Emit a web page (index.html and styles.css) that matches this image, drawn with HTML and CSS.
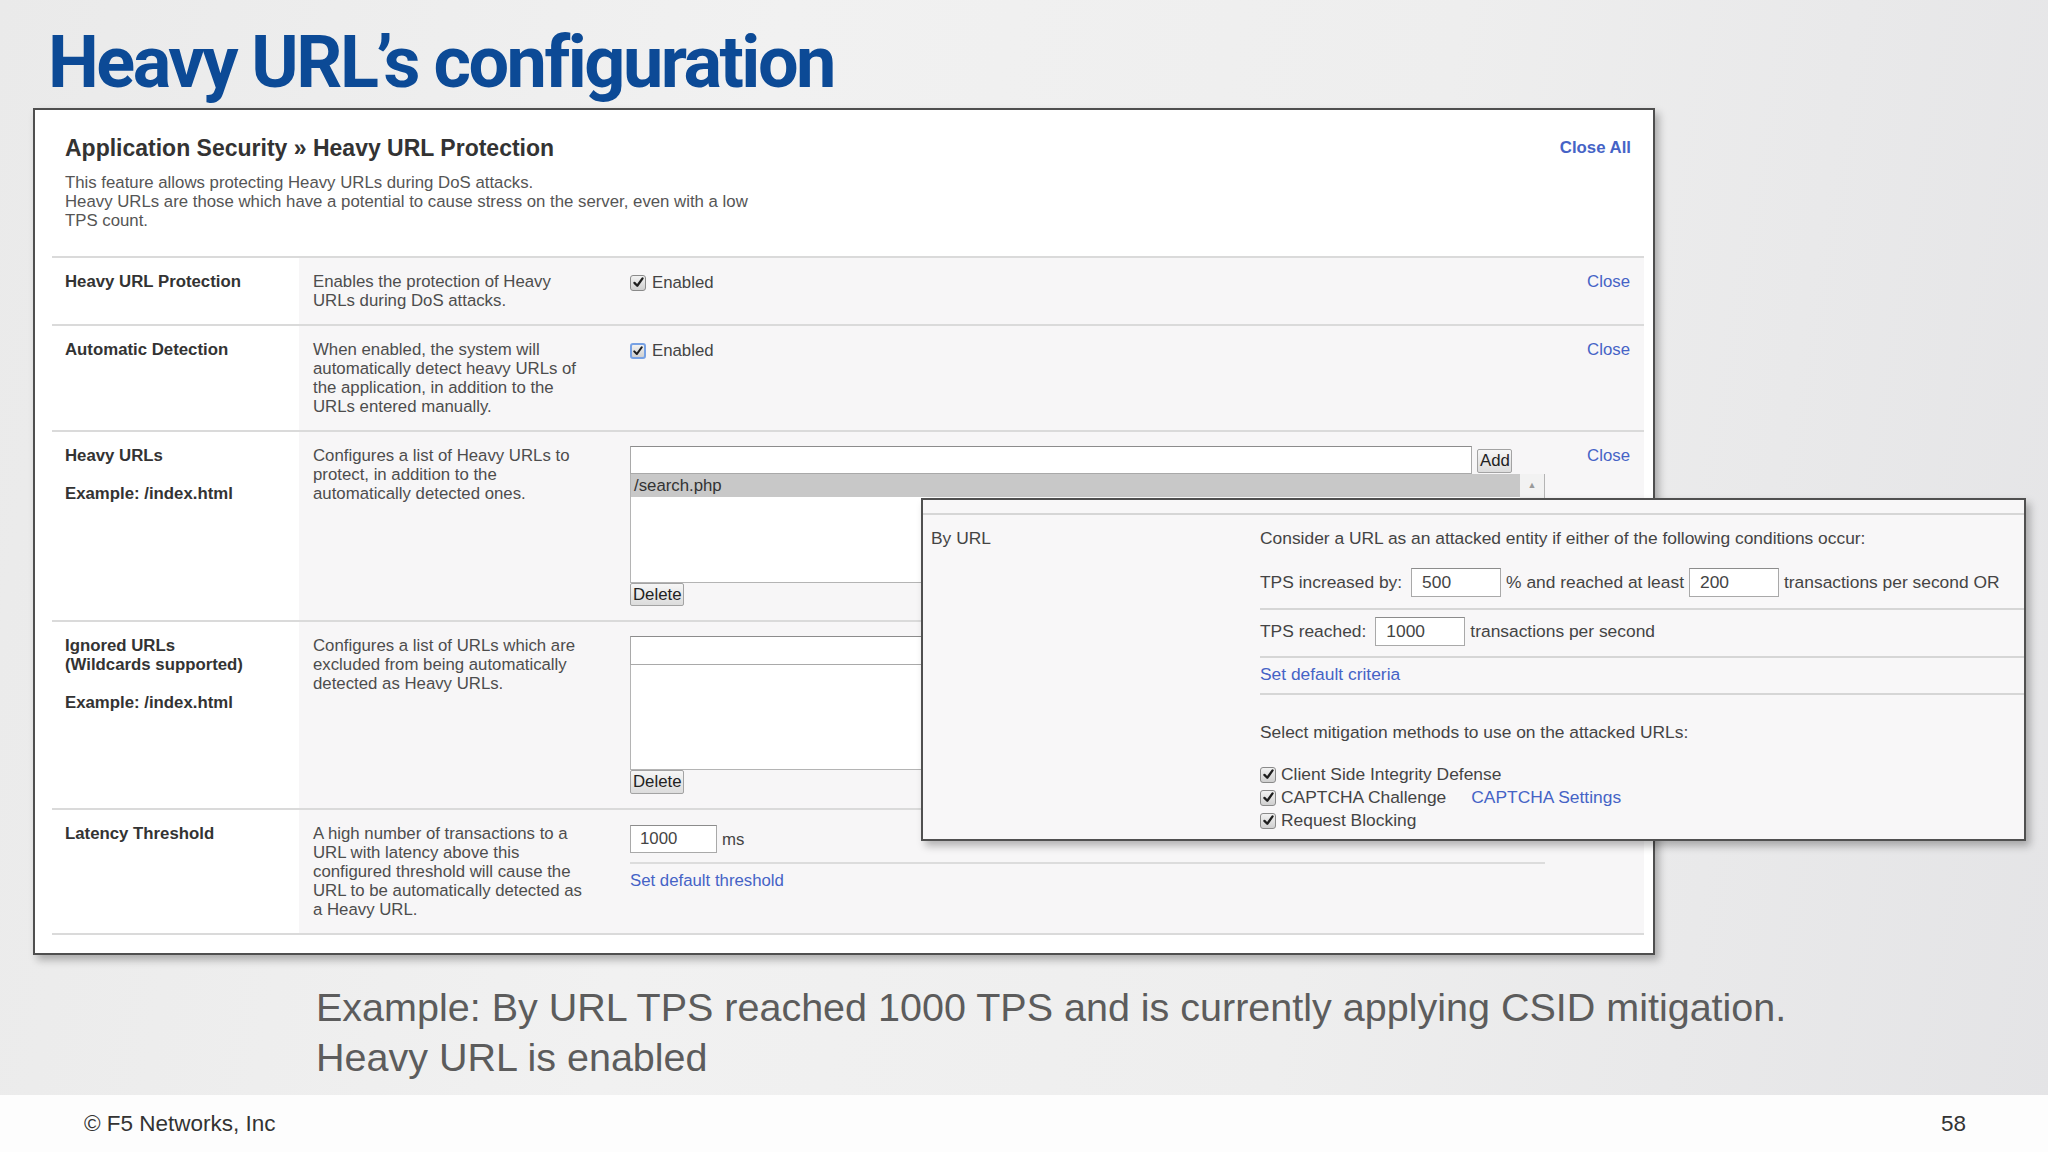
FILE: index.html
```html
<!DOCTYPE html>
<html>
<head>
<meta charset="utf-8">
<title>Heavy URL's configuration</title>
<link rel="stylesheet" href="styles.css">
</head>
<body>
<div class="slide">
  <h1 class="title">Heavy URL’s configuration</h1>

  <div class="panel">
    <div class="phead">
      <div class="phead-top">
        <h2 class="ptitle">Application Security » Heavy URL Protection</h2>
        <span class="closeall">Close All</span>
      </div>
      <p class="intro">This feature allows protecting Heavy URLs during DoS attacks.<br>Heavy URLs are those which have a potential to cause stress on the server, even with a low<br>TPS count.</p>
    </div>

    <div class="row">
      <div class="lbl">Heavy URL Protection</div>
      <div class="desc">Enables the protection of Heavy<br>URLs during DoS attacks.</div>
      <div class="ctl">
        <label class="chk"><span class="box"><svg viewBox="0 0 16 16" width="13" height="13"><path d="M3 8.5 L6.5 12 L13 3" fill="none" stroke="#1e1e1e" stroke-width="2.8" stroke-linecap="round" stroke-linejoin="round"/></svg></span>Enabled</label>
      </div>
      <div class="cls">Close</div>
    </div>

    <div class="row">
      <div class="lbl">Automatic Detection</div>
      <div class="desc">When enabled, the system will<br>automatically detect heavy URLs of<br>the application, in addition to the<br>URLs entered manually.</div>
      <div class="ctl">
        <label class="chk"><span class="box focus"><svg viewBox="0 0 16 16" width="12" height="12"><path d="M3 8.5 L6.5 12 L13 3" fill="none" stroke="#1e1e1e" stroke-width="2.8" stroke-linecap="round" stroke-linejoin="round"/></svg></span>Enabled</label>
      </div>
      <div class="cls">Close</div>
    </div>

    <div class="row">
      <div class="lbl">Heavy URLs<br><br>Example: /index.html</div>
      <div class="desc">Configures a list of Heavy URLs to<br>protect, in addition to the<br>automatically detected ones.</div>
      <div class="ctl">
        <div class="addline"><span class="inp url"></span><span class="btn add">Add</span></div>
        <div class="list list1">
          <div class="lcol"><div class="item">/search.php</div></div>
          <div class="sb">▲</div>
        </div>
        <span class="btn del">Delete</span>
      </div>
      <div class="cls">Close</div>
    </div>

    <div class="row">
      <div class="lbl">Ignored URLs<br>(Wildcards supported)<br><br>Example: /index.html</div>
      <div class="desc">Configures a list of URLs which are<br>excluded from being automatically<br>detected as Heavy URLs.</div>
      <div class="ctl">
        <span class="inp url url2"></span>
        <div class="list list2"><div class="lcol"></div></div>
        <span class="btn del del2">Delete</span>
      </div>
      <div class="cls"></div>
    </div>

    <div class="row">
      <div class="lbl">Latency Threshold</div>
      <div class="desc">A high number of transactions to a<br>URL with latency above this<br>configured threshold will cause the<br>URL to be automatically detected as<br>a Heavy URL.</div>
      <div class="ctl">
        <div class="thr"><span class="inp ms">1000</span><span>ms</span></div>
        <div class="hline"></div>
        <div class="link thlink">Set default threshold</div>
      </div>
      <div class="cls"></div>
    </div>
  </div>

  <div class="popup">
    <div class="ptop"></div>
    <div class="pbody">
      <div class="pl">By URL</div>
      <div class="pr">
        <div class="pline">Consider a URL as an attacked entity if either of the following conditions occur:</div>
        <div class="prow r1">
          <span>TPS increased by:</span><span class="inp pi pi-a">500</span><span>% and reached at least</span><span class="inp pi pi-b">200</span><span>transactions per second OR</span>
        </div>
        <div class="prow r2">
          <span>TPS reached:</span><span class="inp pi pi-a">1000</span><span>transactions per second</span>
        </div>
        <div class="prow r3"><span class="link">Set default criteria</span></div>
        <div class="pline sel">Select mitigation methods to use on the attacked URLs:</div>
        <div class="checks">
          <label class="pchk"><span class="box"><svg viewBox="0 0 16 16" width="13" height="13"><path d="M3 8.5 L6.5 12 L13 3" fill="none" stroke="#1e1e1e" stroke-width="2.8" stroke-linecap="round" stroke-linejoin="round"/></svg></span>Client Side Integrity Defense</label>
          <label class="pchk"><span class="box"><svg viewBox="0 0 16 16" width="13" height="13"><path d="M3 8.5 L6.5 12 L13 3" fill="none" stroke="#1e1e1e" stroke-width="2.8" stroke-linecap="round" stroke-linejoin="round"/></svg></span>CAPTCHA Challenge<span class="link caplink">CAPTCHA Settings</span></label>
          <label class="pchk"><span class="box"><svg viewBox="0 0 16 16" width="13" height="13"><path d="M3 8.5 L6.5 12 L13 3" fill="none" stroke="#1e1e1e" stroke-width="2.8" stroke-linecap="round" stroke-linejoin="round"/></svg></span>Request Blocking</label>
        </div>
      </div>
    </div>
  </div>

  <p class="caption">Example: By URL TPS reached 1000 TPS and is currently applying CSID mitigation.<br>Heavy URL is enabled</p>

  <footer class="footer">
    <span>© F5 Networks, Inc</span>
    <span class="pnum">58</span>
  </footer>
</div>
</body>
</html>
```

FILE: styles.css
```css
html, body {
  margin: 0;
  padding: 0;
}
body {
  width: 2048px;
  height: 1152px;
  overflow: hidden;
  font-family: "Liberation Sans", Arial, sans-serif;
  background: linear-gradient(100deg, #eaeaea 0%, #f1f1f1 35%, #eeeeee 65%, #e4e4e6 100%);
}
.slide {
  position: relative;
  height: 1152px;
  display: flex;
  flex-direction: column;
}
.title {
  margin: 27px 0 0 48px;
  font-family: Roboto, "Liberation Sans", sans-serif;
  font-weight: 700;
  font-size: 72px;
  line-height: 72px;
  letter-spacing: -2.5px;
  color: #0c4a96;
}

/* main panel */
.panel {
  margin: 9px 0 0 33px;
  width: 1622px;
  height: 847px;
  box-sizing: border-box;
  border: 2px solid #4f4f4f;
  background: #fff;
  box-shadow: 4px 5px 8px rgba(0, 0, 0, 0.28);
  padding: 0 9px 0 17px;
  color: #444;
}
.phead {
  padding: 24px 13px 26px 13px;
  border-bottom: 2px solid #dadada;
}
.phead-top {
  display: flex;
  justify-content: space-between;
  align-items: center;
  height: 28px;
}
.ptitle {
  margin: 0;
  font-size: 23px;
  line-height: 28px;
  font-weight: 700;
  color: #333;
}
.closeall {
  font-size: 16.8px;
  font-weight: 700;
  color: #4563c6;
}
.intro {
  margin: 11px 0 0;
  font-size: 16.8px;
  line-height: 19px;
  color: #555;
}

.row {
  display: grid;
  grid-template-columns: 247px 331px 1fr 80px;
  border-bottom: 2px solid #dadada;
  font-size: 16.8px;
  line-height: 19px;
}
.row > div {
  padding-top: 14px;
  padding-bottom: 14px;
}
.lbl {
  padding-left: 13px;
  font-weight: 700;
  color: #333;
  background: #fff;
}
.desc {
  padding-left: 14px;
  color: #4d4d4d;
  background: #f7f6f7;
}
.ctl {
  background: #f7f6f7;
}
.cls {
  padding-right: 14px;
  text-align: right;
  color: #4563c6;
  background: #f7f6f7;
}
.link {
  color: #4563c6;
}

.chk, .pchk {
  display: flex;
  align-items: center;
  gap: 6px;
  height: 19px;
  color: #444;
}
.chk {
  margin-top: 1px;
}
.box {
  width: 16px;
  height: 16px;
  box-sizing: border-box;
  border: 1px solid #8a8a8a;
  border-radius: 3px;
  background: linear-gradient(#f2f2f2, #cfcfcf);
  display: flex;
  align-items: center;
  justify-content: center;
  flex: none;
}
.box.focus {
  border: 2px solid #77a1e4;
}

.inp {
  display: block;
  box-sizing: border-box;
  background: #fff;
  border: 1px solid #a9a9a9;
  border-top-color: #8c8c8c;
  height: 28px;
}
.addline {
  display: flex;
  align-items: flex-start;
}
.url {
  width: 842px;
}
.url2 {
  height: 29px;
}
.btn {
  display: inline-block;
  box-sizing: border-box;
  height: 24px;
  padding: 0 2px;
  border: 1px solid #a3a3a3;
  border-radius: 2px;
  background: linear-gradient(#f6f6f6, #dcdcdc);
  font-size: 16.8px;
  line-height: 22px;
  color: #222;
  text-align: center;
}
.add {
  margin: 3px 0 0 5px;
  width: 35px;
}
.del {
  display: block;
  width: 54px;
  height: 23px;
  line-height: 21px;
}
.del2 {
  height: 24px;
  line-height: 22px;
}
.list {
  width: 915px;
  box-sizing: border-box;
  border: 1px solid #b4b4b4;
  border-top: none;
  background: #fff;
  display: grid;
  grid-template-columns: 1fr 24px;
}
.list1 {
  height: 109px;
}
.list2 {
  height: 105px;
}
.item {
  height: 23px;
  line-height: 23px;
  padding-left: 3px;
  background: #c8c8c8;
  color: #333;
}
.sb {
  background: #f2f2f2;
  text-align: center;
  font-size: 9px;
  line-height: 23px;
  color: #9a9a9a;
}
.thr {
  display: flex;
  align-items: center;
  gap: 5px;
  margin-top: 1px;
  color: #444;
}
.ms {
  width: 87px;
  padding-left: 9px;
  line-height: 26px;
}
.hline {
  width: 915px;
  height: 2px;
  margin-top: 9px;
  background: #dcdcdc;
}
.thlink {
  margin-top: 7px;
}

/* popup */
.popup {
  position: absolute;
  left: 921px;
  top: 498px;
  width: 1105px;
  height: 343px;
  box-sizing: border-box;
  border: 2px solid #505050;
  background: #f8f7f8;
  box-shadow: 4px 5px 8px rgba(0, 0, 0, 0.28);
  font-size: 17.4px;
  line-height: 19px;
  color: #444;
}
.ptop {
  height: 13px;
  border-bottom: 2px solid #d6d6d6;
}
.pbody {
  display: grid;
  grid-template-columns: 337px 1fr;
}
.pl {
  padding: 14px 0 0 8px;
}
.pr {
  padding-top: 14px;
}
.prow {
  display: flex;
  align-items: center;
  border-bottom: 2px solid #d6d6d6;
}
.r1 {
  margin-top: 20px;
  padding-bottom: 11px;
}
.r2 {
  padding: 7px 0 10px;
}
.r3 {
  padding: 7px 0 9px;
}
.pi {
  height: 29px;
  line-height: 27px;
  padding-left: 10px;
  margin: 0 5px;
}
.pi-a {
  width: 90px;
  margin-left: 9px;
}
.pi-b {
  width: 90px;
}
.sel {
  margin-top: 28px;
}
.checks {
  margin-top: 21px;
}
.pchk {
  height: 23px;
  gap: 5px;
}
.caplink {
  margin-left: 20px;
}

/* caption + footer */
.caption {
  margin: 27px 0 0 316px;
  font-size: 39.5px;
  line-height: 50px;
  color: #5c5c5c;
}
.footer {
  margin-top: auto;
  height: 57px;
  background: #fdfdfd;
  display: flex;
  justify-content: space-between;
  align-items: center;
  padding: 0 82px 0 84px;
  font-size: 22.5px;
  color: #333;
}
```
